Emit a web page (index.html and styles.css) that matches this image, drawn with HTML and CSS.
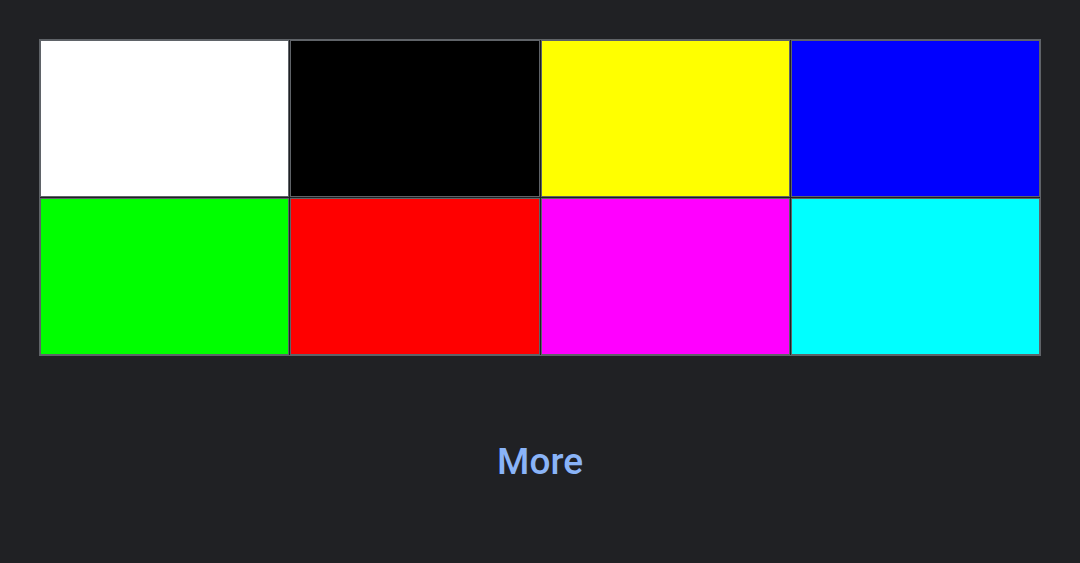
FILE: index.html
```html
<!DOCTYPE html>
<html>
<head>
<meta charset="utf-8">
<link rel="stylesheet" href="styles.css">
</head>
<body>
<div class="page">
  <div class="grid">
    <div class="cell white"></div>
    <div class="cell black"></div>
    <div class="cell yellow"></div>
    <div class="cell blue"></div>
    <div class="cell green"></div>
    <div class="cell red"></div>
    <div class="cell magenta"></div>
    <div class="cell cyan"></div>
  </div>
  <div class="more">More</div>
</div>
</body>
</html>
```
FILE: styles.css
```css
html, body {
  margin: 0;
  padding: 0;
  background: #202124;
  height: 100%;
}
.page {
  padding: 39px 39px 0 39px;
  font-family: Roboto, "Liberation Sans", sans-serif;
}
.grid {
  width: 1000px;
  border: 1px solid #5f6368;
  display: grid;
  grid-template-columns: repeat(4, 1fr);
  grid-auto-rows: 157px;
  gap: 1px;
}
.cell {
  border: 1px solid #5f6368;
}
.white { background: #ffffff; }
.black { background: #000000; }
.yellow { background: #ffff00; }
.blue { background: #0000ff; }
.green { background: #00ff00; }
.red { background: #ff0000; }
.magenta { background: #ff00ff; }
.cyan { background: #00ffff; }
.more {
  margin-top: 82px;
  text-align: center;
  width: 1002px;
  color: #8ab4f8;
  font-size: 37px;
  font-weight: 500;
  line-height: 48px;
}
```
